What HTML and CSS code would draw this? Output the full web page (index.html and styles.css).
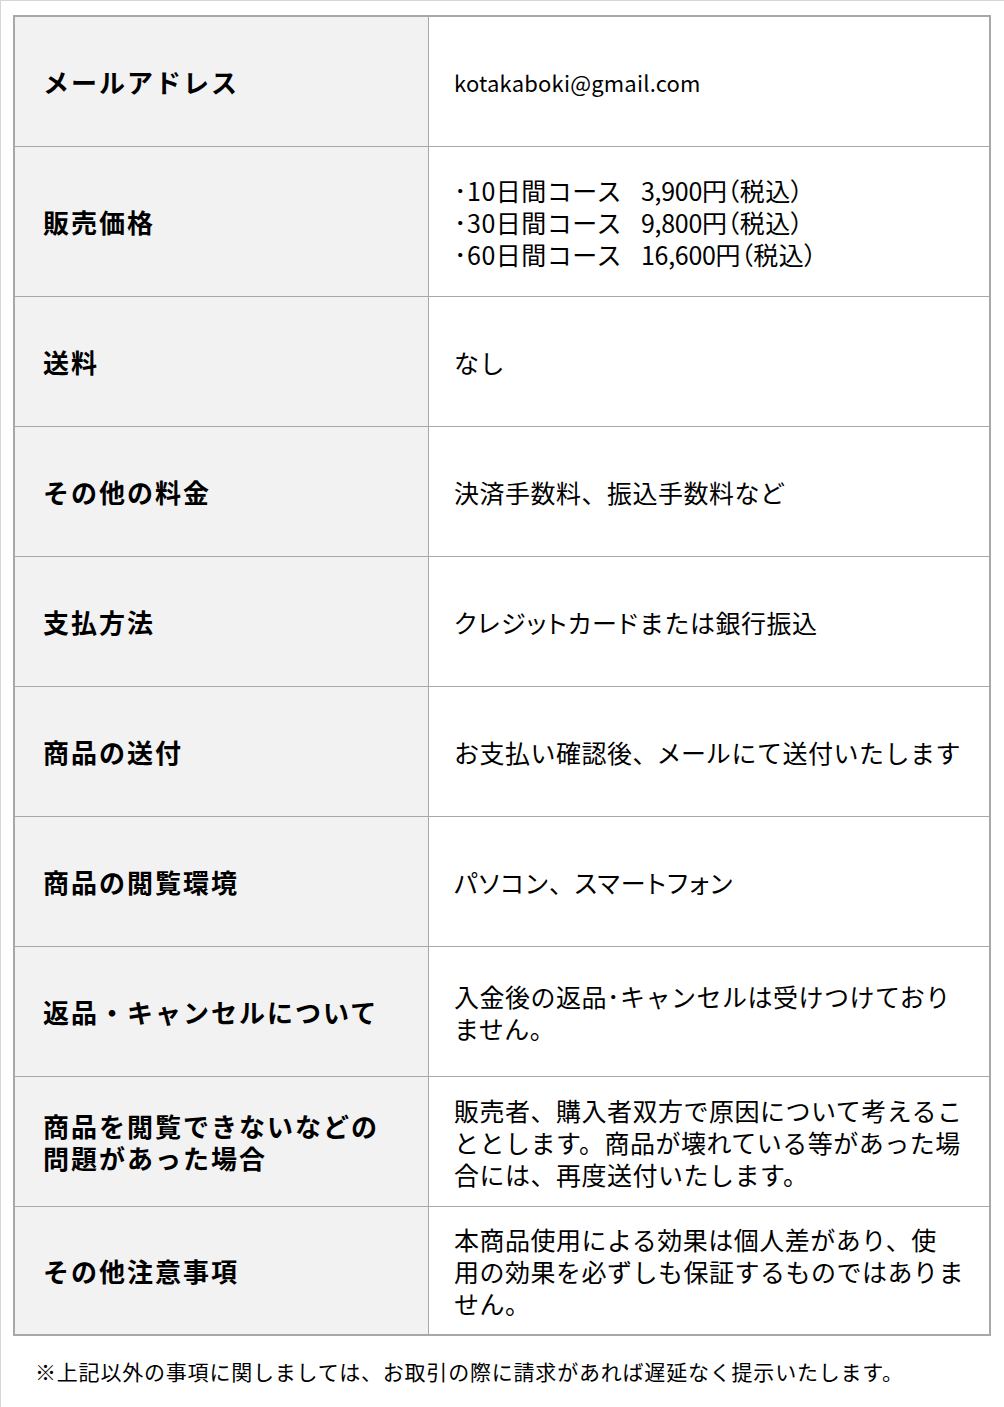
FILE: index.html
```html
<!DOCTYPE html>
<html lang="ja">
<head>
<meta charset="utf-8">
<title>特定商取引法に基づく表記</title>
<link rel="stylesheet" href="styles.css">
</head>
<body>
<div class="page">
  <div class="table">
    <div class="row">
      <div class="th">メールアドレス</div>
      <div class="td"><div class="latin">kotakaboki@gmail.com</div></div>
    </div>
    <div class="row row-tall">
      <div class="th">販売価格</div>
      <div class="td"><div>･10日間コース<span class="price">3,900円<span class="p">（税込）</span></span><br>･30日間コース<span class="price">9,800円<span class="p">（税込）</span></span><br>･60日間コース<span class="price">16,600円<span class="p">（税込）</span></span></div></div>
    </div>
    <div class="row">
      <div class="th">送料</div>
      <div class="td"><div>なし</div></div>
    </div>
    <div class="row">
      <div class="th">その他の料金</div>
      <div class="td"><div>決済手数料、振込手数料など</div></div>
    </div>
    <div class="row">
      <div class="th">支払方法</div>
      <div class="td"><div><span class="k">クレジットカード</span>または銀行振込</div></div>
    </div>
    <div class="row">
      <div class="th">商品の送付</div>
      <div class="td"><div>お支払い確認後、<span class="k">メール</span>にて送付いたします</div></div>
    </div>
    <div class="row">
      <div class="th">商品の閲覧環境</div>
      <div class="td"><div><span class="k">パソコン</span>、<span class="k">スマートフォン</span></div></div>
    </div>
    <div class="row">
      <div class="th">返品・キャンセルについて</div>
      <div class="td"><div>入金後の返品･キャンセルは受けつけており<br>ません。</div></div>
    </div>
    <div class="row">
      <div class="th"><div>商品を閲覧できないなどの<br>問題があった場合</div></div>
      <div class="td"><div>販売者、購入者双方で原因について考えるこ<br>ととします。商品が壊れている等があった場<br>合には、再度送付いたします。</div></div>
    </div>
    <div class="row row-last">
      <div class="th">その他注意事項</div>
      <div class="td"><div>本商品使用による効果は個人差があり、使<br>用の効果を必ずしも保証するものではありま<br>せん。</div></div>
    </div>
  </div>
  <p class="note">※上記以外の事項に関しましては、お取引の際に請求があれば遅延なく提示いたします。</p>
</div>
</body>
</html>
```

FILE: styles.css
```css
html, body {
  margin: 0;
  padding: 0;
  background: #ffffff;
}

.page {
  box-sizing: border-box;
  height: 1407px;
  border-top: 1px solid #d6d6d6;
  border-left: 1px solid #d6d6d6;
  font-family: "Noto Sans CJK JP", "Noto Sans", sans-serif;
  color: #000000;
}

.table {
  box-sizing: border-box;
  width: 978px;
  margin: 14px 0 0 12px;
  border: 2px solid #a8a8a8;
}

.row {
  box-sizing: border-box;
  display: grid;
  grid-template-columns: 414px 1fr;
  height: 130px;
  border-bottom: 1px solid #a8a8a8;
}

.row-tall {
  height: 150px;
}

.row-last {
  height: 127px;
  border-bottom: none;
}

.th {
  box-sizing: border-box;
  display: flex;
  align-items: center;
  background: #f2f2f2;
  border-right: 1px solid #a8a8a8;
  padding-left: 28px;
  font-size: 26px;
  font-weight: 700;
  line-height: 32px;
  letter-spacing: 2px;
  white-space: nowrap;
}

.td {
  box-sizing: border-box;
  display: flex;
  align-items: center;
  padding-left: 25px;
  font-size: 25px;
  line-height: 32px;
  letter-spacing: 0.5px;
  white-space: nowrap;
}

.latin {
  font-size: 22px;
  letter-spacing: 0.2px;
}

.price {
  margin-left: 19px;
  letter-spacing: -0.3px;
}

.p {
  font-feature-settings: "palt";
  letter-spacing: 0.5px;
}

.k {
  font-feature-settings: "palt";
  letter-spacing: 1.2px;
}

.note {
  margin: 0;
  padding: 19px 0 0 34px;
  font-size: 21px;
  line-height: 32px;
  letter-spacing: 0.8px;
  white-space: nowrap;
}
```
